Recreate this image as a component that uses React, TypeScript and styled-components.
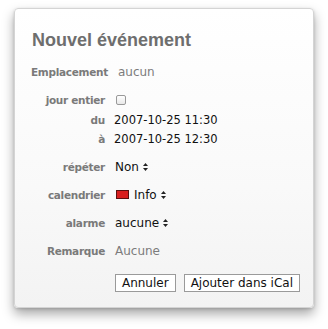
import React from 'react';
import styled, { createGlobalStyle } from 'styled-components';

type Field = Readonly<{
    label: string;
    value: React.ReactNode;
    gap: number;
}>;

const GlobalStyle = createGlobalStyle`
    html, body {
        margin: 0;
        padding: 0;
        background: #ffffff;
    }
    body {
        font-family: 'DejaVu Sans', 'Liberation Sans', sans-serif;
    }
`;

const UpDown = () => (
    <svg width="5" height="8" viewBox="0 0 5 8">
        <path d="M2.5 0 L5 3 L0 3 Z" fill="#222" />
        <path d="M0 5 L5 5 L2.5 8 Z" fill="#222" />
    </svg>
);

const Popup = ({ children }: { children: React.ReactNode }) => (
    <PopupButton>
        {children}
        <UpDown />
    </PopupButton>
);

const App = () => {
    const fields: ReadonlyArray<Field> = [
        { label: 'Emplacement', value: <Muted>aucun</Muted>, gap: 0 },
        { label: 'jour entier', value: <Checkbox />, gap: 9 },
        { label: 'du', value: <Plain>2007-10-25 11:30</Plain>, gap: 1 },
        { label: 'à', value: <Plain>2007-10-25 12:30</Plain>, gap: 0 },
        { label: 'répéter', value: <Popup>Non</Popup>, gap: 9 },
        {
            label: 'calendrier',
            value: (
                <Popup>
                    <Swatch />
                    Info
                </Popup>
            ),
            gap: 9,
        },
        { label: 'alarme', value: <Popup>aucune</Popup>, gap: 9 },
        { label: 'Remarque', value: <Muted>Aucune</Muted>, gap: 9 },
    ];

    return (
        <Page>
            <GlobalStyle />
            <Sheet>
                <Title>Nouvel événement</Title>
                <Form>
                    {fields.map((field) => (
                        <Row key={field.label} $gap={field.gap}>
                            <Label>{field.label}</Label>
                            <Value>{field.value}</Value>
                        </Row>
                    ))}
                </Form>
                <Actions>
                    <Button>Annuler</Button>
                    <Button>Ajouter dans iCal</Button>
                </Actions>
            </Sheet>
        </Page>
    );
};

const Page = styled.div`
    width: 328px;
    height: 329px;
    padding: 8px 14px 0 14px;
    box-sizing: border-box;
`;

const Sheet = styled.div`
    width: 300px;
    height: 300px;
    box-sizing: border-box;
    padding: 20px 13px 15px 16px;
    border: 1px solid #d4d4d4;
    border-radius: 4px;
    background: linear-gradient(to bottom, #ffffff 0%, #f9f9f9 60%, #f3f3f3 100%);
    box-shadow: 0 6px 12px rgba(0, 0, 0, 0.35), 0 1px 3px rgba(0, 0, 0, 0.15);
    display: flex;
    flex-direction: column;
`;

const Title = styled.h1`
    margin: 0;
    padding-left: 1px;
    font-family: 'Liberation Sans', Arial, sans-serif;
    font-size: 18px;
    line-height: 22px;
    font-weight: bold;
    color: #6e6e6e;
`;

const Form = styled.div`
    margin-top: 11px;
    display: flex;
    flex-direction: column;
`;

const Row = styled.div<{ $gap: number }>`
    display: flex;
    align-items: center;
    height: 19px;
    margin-top: ${({ $gap }) => $gap}px;
`;

const Label = styled.span`
    flex: 0 0 74px;
    text-align: right;
    font-size: 10.5px;
    letter-spacing: -0.3px;
    font-weight: bold;
    color: #7a7a7a;
    white-space: nowrap;
`;

const Value = styled.div`
    margin-left: 10px;
    display: flex;
    align-items: center;
`;

const Plain = styled.span`
    margin-left: -1px;
    font-size: 11.5px;
    color: #111;
    white-space: nowrap;
`;

const Muted = styled.span`
    font-size: 12px;
    color: #7c7c7c;
`;

const Checkbox = styled.span`
    display: block;
    width: 8px;
    height: 8px;
    margin-left: 1px;
    border: 1px solid #999;
    border-radius: 2px;
    background: linear-gradient(to bottom, #ffffff, #e8e8e8);
`;

const PopupButton = styled.span`
    display: flex;
    align-items: center;
    gap: 4px;
    font-size: 12px;
    color: #111;
`;

const Swatch = styled.span`
    display: inline-block;
    width: 11px;
    height: 7px;
    margin-left: 1px;
    margin-right: 1px;
    background: #d81e1e;
    border: 1px solid #5a1010;
`;

const Actions = styled.div`
    margin-top: auto;
    display: flex;
    justify-content: flex-end;
    gap: 8px;
`;

const Button = styled.button`
    height: 18px;
    padding: 0 6px;
    font-family: 'DejaVu Sans', 'Liberation Sans', sans-serif;
    font-size: 12px;
    line-height: 16px;
    color: #111;
    background: #ffffff;
    border: 1px solid #9a9a9a;
    border-radius: 0;
`;

export default App;
